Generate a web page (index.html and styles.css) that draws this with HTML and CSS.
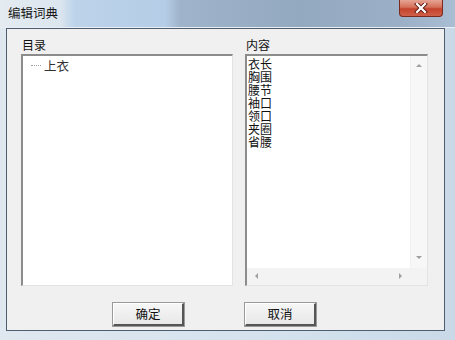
FILE: index.html
```html
<!DOCTYPE html>
<html lang="zh-CN">
<head>
    <meta charset="UTF-8">
    <title>编辑词典</title>
    <link rel="stylesheet" href="styles.css">
</head>
<body>
    <div class="window">
        <div class="titlebar">
            <span class="title">编辑词典</span>
            <div class="close-btn">
                <svg width="14" height="10" viewBox="0 0 14 10">
                    <path d="M3 1 L11 9 M11 1 L3 9" stroke="#5a1a10" stroke-width="4" stroke-linecap="square"/>
                    <path d="M3 1 L11 9 M11 1 L3 9" stroke="#ffffff" stroke-width="2.2" stroke-linecap="square"/>
                </svg>
            </div>
        </div>

        <div class="client">
            <div class="panes">
                <label class="pane-label">目录</label>
                <label class="pane-label">内容</label>

                <div class="listbox tree">
                    <div class="tree-item">
                        <span class="tree-line"></span>
                        <span class="tree-text">上衣</span>
                    </div>
                </div>

                <div class="listbox scrolled">
                    <ul class="items">
                        <li>衣长</li>
                        <li>胸围</li>
                        <li>腰节</li>
                        <li>袖口</li>
                        <li>领口</li>
                        <li>夹圈</li>
                        <li>省腰</li>
                    </ul>
                    <div class="vscroll">
                        <span class="arrow up"></span>
                        <span class="arrow down"></span>
                    </div>
                    <div class="hscroll">
                        <span class="arrow left"></span>
                        <span class="arrow right"></span>
                    </div>
                    <div class="corner"></div>
                </div>

                <div class="btn-cell ok-cell">
                    <button class="btn">确定</button>
                </div>
                <div class="btn-cell">
                    <button class="btn">取消</button>
                </div>
            </div>
        </div>
    </div>
</body>
</html>
```

FILE: styles.css
```css
body {
    margin: 0;
    padding: 0;
    background-color: #ffffff;
    font-family: "Noto Sans CJK SC", "DejaVu Sans", sans-serif;
    color: #111;
}
.window {
    width: 455px;
    height: 340px;
    background: linear-gradient(to right, #dfe7ef 0%, #d4e2ee 60%, #c9d9e8 100%);
    overflow: hidden;
}
.titlebar {
    height: 28px;
    display: flex;
    justify-content: space-between;
    align-items: flex-start;
    background: linear-gradient(to right, #e4ebf1 0px, #dce6ef 60px, #bcd3ea 75px, #b5cde6 165px, #9fb4ca 180px, #93a9c0 300px, #9bb0c6 400px, #a9bed3 455px);
    box-shadow: inset 0 -1px 0 #e9eff5;
}
.title {
    font-size: 12.5px;
    line-height: 16px;
    padding: 5px 0 0 8px;
    color: #1a1a1a;
}
.close-btn {
    width: 44px;
    height: 17px;
    margin-right: 12px;
    display: flex;
    align-items: center;
    justify-content: center;
    background: linear-gradient(to bottom, #e6a494 0%, #d5705a 45%, #c4432c 55%, #d0604a 100%);
    border: 1px solid #7a2a1e;
    border-top: none;
    border-radius: 0 0 4px 4px;
    box-sizing: border-box;
}
.client {
    margin: 0 10px 0 6px;
    height: 303px;
    box-sizing: border-box;
    border: 1px solid #4e5e70;
    background-color: #f0f0f0;
    padding: 8px 0 0 14px;
}
.panes {
    display: grid;
    grid-template-columns: 212px 183px;
    grid-template-rows: 17px 232px 37px;
    column-gap: 12px;
}
.pane-label {
    font-size: 12px;
    line-height: 15px;
    padding-left: 1px;
    color: #111;
}
.listbox {
    background-color: #ffffff;
    border-top: 2px solid #8c8c8c;
    border-left: 2px solid #8c8c8c;
    border-right: 1px solid #e3e3e3;
    border-bottom: 1px solid #e3e3e3;
    box-sizing: border-box;
}
.tree {
    padding: 2px 0 0 8px;
}
.tree-item {
    display: flex;
    align-items: center;
    height: 15px;
}
.tree-line {
    width: 10px;
    border-top: 1px dotted #a0a0a0;
    margin-right: 3px;
}
.tree-text {
    font-size: 12.5px;
    line-height: 15px;
    color: #333;
}
.scrolled {
    display: grid;
    grid-template-columns: 1fr 17px;
    grid-template-rows: 1fr 17px;
}
.items {
    list-style: none;
    margin: 0;
    padding: 1px 0 0 1px;
    font-size: 12px;
    line-height: 13px;
    color: #111;
}
.vscroll {
    background-color: #f7f7f7;
    border-left: 1px solid #f0f0f0;
    position: relative;
}
.hscroll {
    background-color: #f3f3f3;
    position: relative;
}
.corner {
    background-color: #f3f3f3;
}
.arrow {
    position: absolute;
    width: 0;
    height: 0;
}
.arrow.up {
    top: 8px;
    left: 5px;
    border-left: 3px solid transparent;
    border-right: 3px solid transparent;
    border-bottom: 3px solid #a0a0a0;
}
.arrow.down {
    bottom: 9px;
    left: 5px;
    border-left: 3px solid transparent;
    border-right: 3px solid transparent;
    border-top: 3px solid #a0a0a0;
}
.arrow.left {
    top: 5px;
    left: 8px;
    border-top: 3px solid transparent;
    border-bottom: 3px solid transparent;
    border-right: 3px solid #a0a0a0;
}
.arrow.right {
    top: 5px;
    right: 8px;
    border-top: 3px solid transparent;
    border-bottom: 3px solid transparent;
    border-left: 3px solid #a0a0a0;
}
.btn-cell {
    padding-top: 14px;
}
.ok-cell {
    padding-left: 92px;
}
.btn {
    width: 71px;
    height: 23px;
    padding: 0;
    font-family: "Noto Sans CJK SC", sans-serif;
    font-size: 12.5px;
    color: #111;
    background: linear-gradient(to bottom, #f6f6f6, #e8e8e8);
    border-top: 1px solid #ffffff;
    border-left: 1px solid #ffffff;
    border-right: 2px solid #555555;
    border-bottom: 2px solid #555555;
    box-shadow: 0 0 0 1px #9a9a9a;
}
```
